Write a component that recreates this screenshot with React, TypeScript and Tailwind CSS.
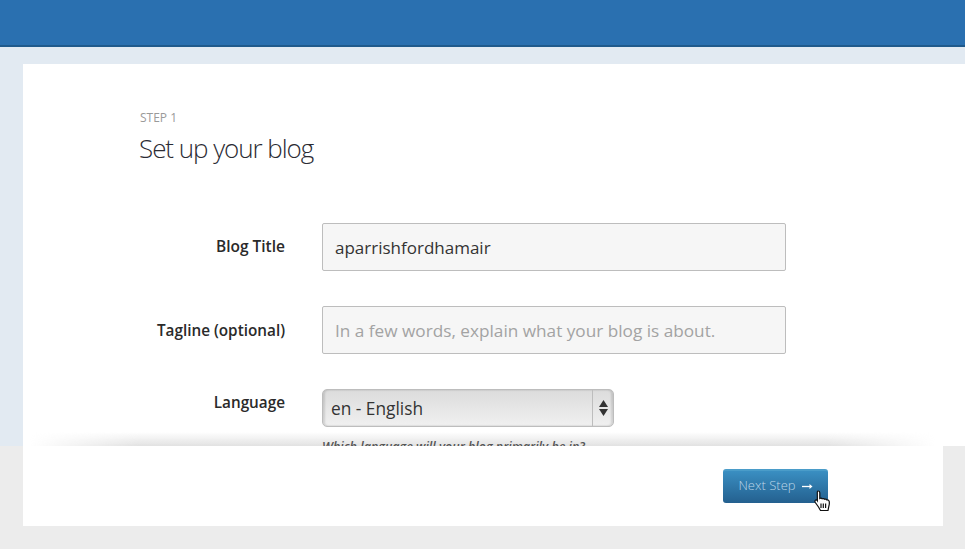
export default function App() {
  const font = { fontFamily: '"Open Sans", sans-serif' };
  return (
    <div style={font} className="relative h-[549px] w-[965px] overflow-hidden bg-[#ececec]">
      <header className="h-[47px] border-b-2 border-[#1f5a8c] bg-[#2a70b0]" />
      <div className="h-[399px] overflow-hidden bg-[#e2eaf2] pl-[23px] pt-[17px]">
        <main className="h-[500px] bg-white pl-[116px] pt-[47px]">
          <div className="pl-[1px] text-[12px] leading-[14px] text-[#9a9a9a]">STEP 1</div>
          <h1 className="mt-[5px] text-[26px] font-light leading-[36px] tracking-[-1.05px] text-[#2b2b33]">Set up your blog</h1>
          <div className="mt-[57px] flex flex-col">
            <div className="flex h-[48px] items-center">
              <label className="w-[146px] text-right text-[15.500px] font-semibold text-[#2a2a2a]">Blog Title</label>
              <input readOnly value="aparrishfordhamair" className="ml-[37px] h-[48px] w-[464px] rounded-[2px] border border-[#bdbdbd] bg-[#f6f6f6] px-[12px] text-[17px] text-[#333] outline-none" />
            </div>
            <div className="mt-[35px] flex h-[48px] items-center">
              <label className="w-[146px] text-right text-[15.300px] font-semibold text-[#2a2a2a]">Tagline (optional)</label>
              <input readOnly placeholder="In a few words, explain what your blog is about." className="ml-[37px] h-[48px] w-[464px] rounded-[2px] border border-[#bdbdbd] bg-[#f6f6f6] px-[12px] text-[17.200px] text-[#333] outline-none placeholder:text-[#a3a3a3]" />
            </div>
            <div className="mt-[35px] flex items-start">
              <label className="w-[146px] pt-[3px] text-right text-[15.300px] font-semibold leading-[20px] text-[#2a2a2a]">Language</label>
              <div className="ml-[37px] flex h-[38px] w-[292px] rounded-[5px] border border-[#bdbdbd] bg-gradient-to-b from-[#dcdcdc] to-[#f0f0f0] shadow-[inset_2px_0_2px_rgba(0,0,0,0.12),inset_-2px_0_2px_rgba(0,0,0,0.12)]">
                <span className="flex-1 pl-[8px] text-[17.300px] leading-[37px] text-[#333]">en - English</span>
                <span className="flex w-[21px] flex-col items-center justify-center gap-[2px] border-l border-[#bdbdbd]">
                  <svg width="9" height="7" viewBox="0 0 9 7"><path d="M4.5 0L9 7H0z" fill="#333" /></svg>
                  <svg width="9" height="7" viewBox="0 0 9 7"><path d="M0 0h9L4.500 7z" fill="#333" /></svg>
                </span>
              </div>
            </div>
            <p className="relative z-10 ml-[183px] mt-[12px] whitespace-nowrap text-[12.500px] font-semibold italic leading-[16px] text-[#555]">Which language will your blog primarily be in?</p>
          </div>
        </main>
      </div>
      <footer className="relative mx-[23px] flex h-[80px] w-[920px] items-start justify-end bg-white pr-[115px] pt-[23px]">
        <div className="pointer-events-none absolute bottom-full left-[7px] right-[8px] h-[14px] bg-gradient-to-t from-[#e2e2e2] to-[#ffffff00] [mask-image:linear-gradient(to_right,transparent,black_12%,black_88%,transparent)]" />
        <button className="flex h-[34px] w-[105px] items-center justify-center gap-[6px] rounded-[3px] border-t-2 border-[#4a9cc9] bg-gradient-to-b from-[#3a8fc2] to-[#24608f] pb-[2px] text-[13px] font-light text-[#bcd6e8]">
          <span>Next Step</span>
          <svg width="11" height="7" viewBox="0 0 11 7"><path d="M0 3.500h9" stroke="#fff" strokeWidth="1.300" /><path d="M7.500 1L10.500 3.500 7.500 6z" fill="#fff" /></svg>
        </button>
        <svg className="absolute left-[791px] top-[44px]" width="18" height="22" viewBox="0 0 18 22">
          <path d="M4 1c1.200 0 1.800.7 1.800 1.700v5.800c.9-.5 1.900-.4 2.400.3.900-.5 1.900-.3 2.300.5 1-.4 2-.1 2.400.7.900-.1 2 .3 2.300 1.300.3 1.500.1 3.200-.3 4.700L14 20.500H6.500L4.500 17 1.300 12.500C.700 11.500.800 10.500 1.700 10c.7-.3 1.300.1 1.700.7l-.1-8c0-1 .200-1.700.700-1.700z" fill="#fff" stroke="#111" strokeWidth="1.200" />
          <path d="M7 13.500v4.500M9.300 13.500v4.500M11.600 13.500v4.500" stroke="#111" strokeWidth="1.200" />
        </svg>
      </footer>
    </div>
  );
}
